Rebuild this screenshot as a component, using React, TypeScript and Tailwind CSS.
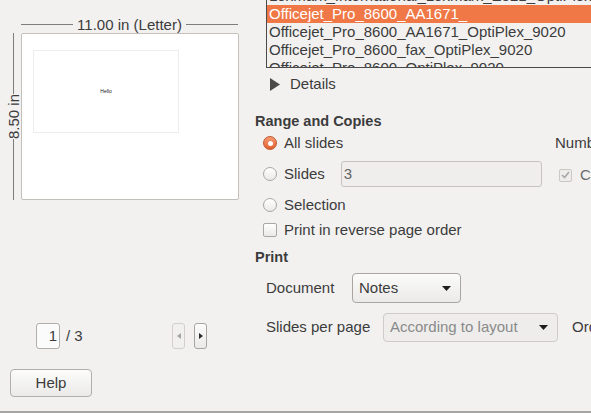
const font = { fontFamily: '"Liberation Sans", Arial, sans-serif' }

const printers = [
  'Lexmark_International_Lexmark_E321_OptiPlex_9020',
  'Officejet_Pro_8600_AA1671_',
  'Officejet_Pro_8600_AA1671_OptiPlex_9020',
  'Officejet_Pro_8600_fax_OptiPlex_9020',
  'Officejet_Pro_8600_OptiPlex_9020',
]

function Radio({ checked }: { checked?: boolean }) {
  return checked ? (
    <span className="w-[14px] h-[14px] rounded-full border border-[#c0572a] bg-gradient-to-b from-[#f59a72] to-[#e2602d] flex items-center justify-center">
      <span className="w-[5px] h-[5px] rounded-full bg-white" />
    </span>
  ) : (
    <span className="w-[14px] h-[14px] rounded-full border border-[#aaa7a2] bg-gradient-to-b from-white to-[#eae9e7]" />
  )
}

function Arrow({ className = '' }: { className?: string }) {
  return (
    <svg width="9" height="5" viewBox="0 0 9 5" className={className}>
      <path d="M0 0 L9 0 L4.5 5 Z" fill="#1e1e1e" />
    </svg>
  )
}

function PreviewPane() {
  return (
    <div className="w-[255px] shrink-0 flex flex-col">
      <div className="mt-[15px] h-[18px] ml-[21px] w-[217px] flex items-center">
        <div className="flex-1 h-px bg-[#7d7d7d]" />
        <span className="px-[4px] text-[15px] text-[#3c3c3c] leading-none">11.00 in (Letter)</span>
        <div className="flex-1 h-px bg-[#7d7d7d]" />
      </div>
      <div className="flex h-[167px]">
        <div className="ml-[6px] w-[14px] mr-px flex flex-col items-center">
          <div className="flex-1 w-px bg-[#7d7d7d]" />
          <span className="py-[3px] text-[15px] text-[#3c3c3c] leading-none [writing-mode:vertical-rl] rotate-180">
            8.50 in
          </span>
          <div className="flex-1 w-px bg-[#7d7d7d]" />
        </div>
        <div className="w-[218px] h-[167px] bg-white border border-[#c3c0bb] rounded-[2px] pt-[16px] pl-[11px]">
          <div className="w-[146px] h-[83px] border border-[#ededed] flex items-center justify-center">
            <span className="text-[5px] text-[#222222] leading-none">Hello</span>
          </div>
        </div>
      </div>
      <div className="mt-[123px] h-[26px] flex items-center">
        <div className="ml-[36px] w-[24px] h-[26px] rounded-[3px] border border-[#b2afaa] bg-[#fbfbfb] flex items-center justify-end pr-[2px] text-[15px] text-[#3c3c3c]">
          1
        </div>
        <span className="ml-[6px] text-[15px] text-[#3c3c3c]">/ 3</span>
        <div className="ml-auto mr-[48px] flex gap-[9px]">
          <div className="w-[13px] h-[26px] rounded-[3px] border border-[#d3d0cb] bg-[#f1f0ee] flex items-center justify-center">
            <svg width="4" height="6" viewBox="0 0 4 6"><path d="M4 0 L4 6 L0 3 Z" fill="#a5a5a5" /></svg>
          </div>
          <div className="w-[13px] h-[26px] rounded-[3px] border border-[#a9a6a1] bg-gradient-to-b from-[#fbfbfb] to-[#ebeae8] flex items-center justify-center">
            <svg width="4" height="6" viewBox="0 0 4 6"><path d="M0 0 L0 6 L4 3 Z" fill="#2a2a2a" /></svg>
          </div>
        </div>
      </div>
      <button className="mt-[20px] ml-[10px] w-[82px] h-[28px] rounded-[4px] border border-[#b2afaa] bg-gradient-to-b from-[#fcfcfb] to-[#ebeae8] text-[15px] text-[#3c3c3c]">
        Help
      </button>
    </div>
  )
}

function OptionsPane() {
  return (
    <div className="flex-1 flex flex-col min-w-0">
      <div className="ml-[11px] h-[68px] border-l border-b border-[#4a4a4a] overflow-hidden">
        <div className="-mt-[13px]">
          {printers.map((p, i) => (
            <div
              key={p}
              className={`h-[18px] pl-[2px] flex items-center text-[15px] whitespace-nowrap ${
                i === 1 ? 'bg-[#f07746] text-white' : 'text-[#3c3c3c]'
              }`}
            >
              {p}
            </div>
          ))}
        </div>
      </div>

      <div className="mt-[7px] h-[18px] flex items-center">
        <svg width="10" height="13" viewBox="0 0 10 13" className="ml-[15px]">
          <path d="M0 0 L10 6.5 L0 13 Z" fill="#4a4a4a" />
        </svg>
        <span className="ml-[10px] text-[15px] text-[#3c3c3c]">Details</span>
      </div>

      <div className="mt-[18px] h-[18px] pt-[4px] flex items-center text-[14.5px] font-bold text-[#3c3c3c]">
        Range and Copies
      </div>

      <div className="flex">
        <div className="w-[300px] shrink-0 flex flex-col text-[15px] text-[#3c3c3c]">
          <div className="h-[28px] pl-[8px] flex items-center gap-[7px]">
            <Radio checked />
            <span>All slides</span>
          </div>
          <div className="h-[34px] pl-[8px] flex items-center gap-[7px]">
            <Radio />
            <span>Slides</span>
            <div className="ml-[9px] w-[201px] h-[26px] rounded-[3px] border border-[#c6c3be] bg-[#efeeec] flex items-center pl-[2px] text-[#646464]">
              3
            </div>
          </div>
          <div className="h-[28px] pl-[8px] flex items-center gap-[7px]">
            <Radio />
            <span>Selection</span>
          </div>
          <div className="h-[22px] pl-[8px] flex items-center gap-[7px]">
            <span className="w-[14px] h-[14px] rounded-[2px] border border-[#aaa7a2] bg-gradient-to-b from-white to-[#eae9e7]" />
            <span>Print in reverse page order</span>
          </div>
        </div>
        <div className="flex flex-col text-[15px] whitespace-nowrap">
          <div className="h-[28px] flex items-center text-[#3c3c3c]">Number of copies</div>
          <div className="mt-[9px] h-[18px] pl-[4px] flex items-center gap-[8px] text-[#6a6a6a]">
            <span className="w-[13px] h-[13px] rounded-[2px] border border-[#cbc8c3] bg-[#eeedeb] flex items-center justify-center">
              <svg width="9" height="8" viewBox="0 0 9 8">
                <path d="M1 4 L3.5 6.5 L8 1" fill="none" stroke="#a9a9a9" strokeWidth="1.6" />
              </svg>
            </span>
            <span>Collate</span>
          </div>
        </div>
      </div>

      <div className="mt-[8px] h-[18px] flex items-center text-[14.5px] font-bold text-[#3c3c3c]">Print</div>

      <div className="mt-[6px] h-[30px] flex items-center text-[15px] text-[#3c3c3c]">
        <span className="ml-[11px] w-[86px] shrink-0">Document</span>
        <div className="w-[109px] h-[30px] shrink-0 rounded-[4px] border border-[#a9a6a1] bg-gradient-to-b from-[#fbfbfb] to-[#ebeae8] flex items-center pl-[6px] pr-[9px]">
          <span className="flex-1">Notes</span>
          <Arrow />
        </div>
      </div>

      <div className="mt-[10px] h-[29px] flex items-center text-[15px] whitespace-nowrap">
        <span className="ml-[11px] w-[117px] shrink-0 text-[#3c3c3c]">Slides per page</span>
        <div className="w-[175px] h-[29px] shrink-0 rounded-[4px] border border-[#cfccc7] bg-[#eeedeb] flex items-center pl-[6px] pr-[9px] text-[#8a8a8a]">
          <span className="flex-1">According to layout</span>
          <Arrow />
        </div>
        <span className="ml-[14px] shrink-0 text-[#3c3c3c]">Order</span>
      </div>
    </div>
  )
}

export default function App() {
  return (
    <div className="w-[591px] h-[413px] bg-[#f2f1f0] overflow-hidden flex flex-col" style={font}>
      <div className="h-[411px] flex overflow-hidden">
        <PreviewPane />
        <OptionsPane />
      </div>
      <div className="h-[2px] bg-[#a4a4a4]" />
    </div>
  )
}
